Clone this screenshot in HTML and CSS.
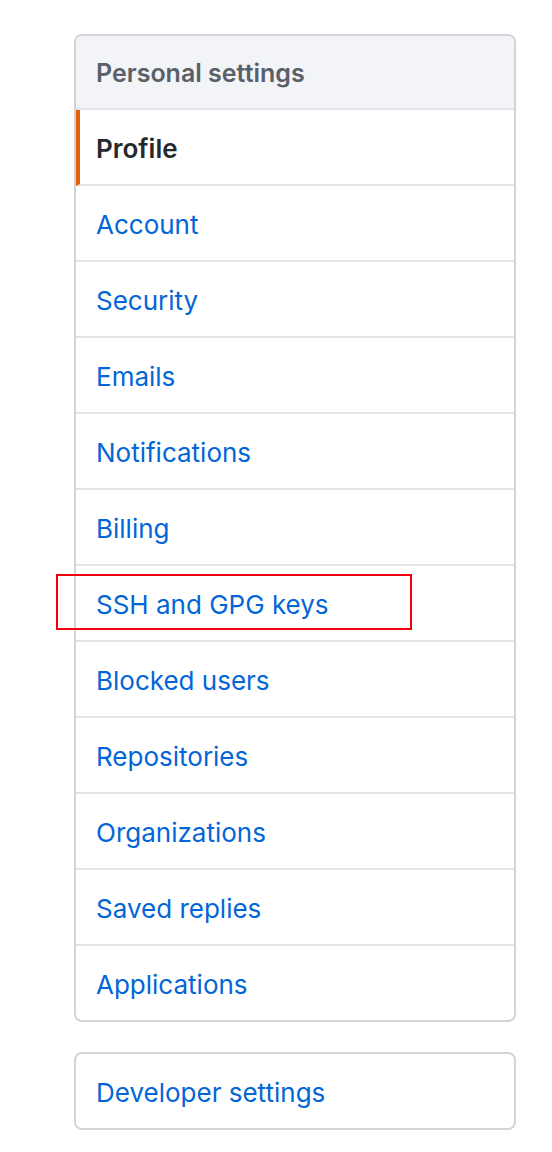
FILE: index.html
```html
<!DOCTYPE html>
<html>
<head>
<meta charset="utf-8">
<link rel="stylesheet" href="styles.css">
</head>
<body>
<div class="page">
  <nav class="menu">
    <h3 class="menu-heading">Personal settings</h3>
    <a class="menu-item selected">Profile</a>
    <a class="menu-item">Account</a>
    <a class="menu-item">Security</a>
    <a class="menu-item">Emails</a>
    <a class="menu-item">Notifications</a>
    <a class="menu-item">Billing</a>
    <a class="menu-item highlighted">SSH and GPG keys<span class="annotation"></span></a>
    <a class="menu-item">Blocked users</a>
    <a class="menu-item">Repositories</a>
    <a class="menu-item">Organizations</a>
    <a class="menu-item">Saved replies</a>
    <a class="menu-item">Applications</a>
  </nav>
  <nav class="menu">
    <a class="menu-item">Developer settings</a>
  </nav>
</div>
</body>
</html>
```
FILE: styles.css
```css
* { box-sizing: border-box; }
html, body { margin: 0; padding: 0; background: #ffffff; }
body {
  font-family: Inter, "Liberation Sans", Arial, sans-serif;
  width: 552px;
  height: 1152px;
}
.page {
  padding: 34px 36px 0 74px;
  display: flex;
  flex-direction: column;
  gap: 30px;
}
.menu {
  width: 442px;
  border: 2px solid #d1d5da;
  border-radius: 8px;
  background: #ffffff;
  display: flex;
  flex-direction: column;
}
.menu-heading {
  margin: 0;
  height: 74px;
  padding: 2px 20px 0;
  display: flex;
  align-items: center;
  background: #f3f4f7;
  border-bottom: 2px solid #e1e4e8;
  border-radius: 6px 6px 0 0;
  font-size: 25px;
  font-weight: 600;
  color: #586069;
}
.menu-item {
  position: relative;
  height: 76px;
  padding: 2px 20px 0 20px;
  display: flex;
  align-items: center;
  border-bottom: 2px solid #e1e4e8;
  font-size: 26px;
  color: #0366d6;
  text-decoration: none;
}
.menu-item:last-child {
  border-bottom: none;
  height: 74px;
}
.menu-item.selected {
  font-weight: 600;
  color: #24292e;
  border-left: 4px solid #e36209;
  padding-left: 16px;
}
.annotation {
  position: absolute;
  left: -20px;
  top: 8px;
  width: 356px;
  height: 56px;
  border: 2px solid #f2000f;
}
```
